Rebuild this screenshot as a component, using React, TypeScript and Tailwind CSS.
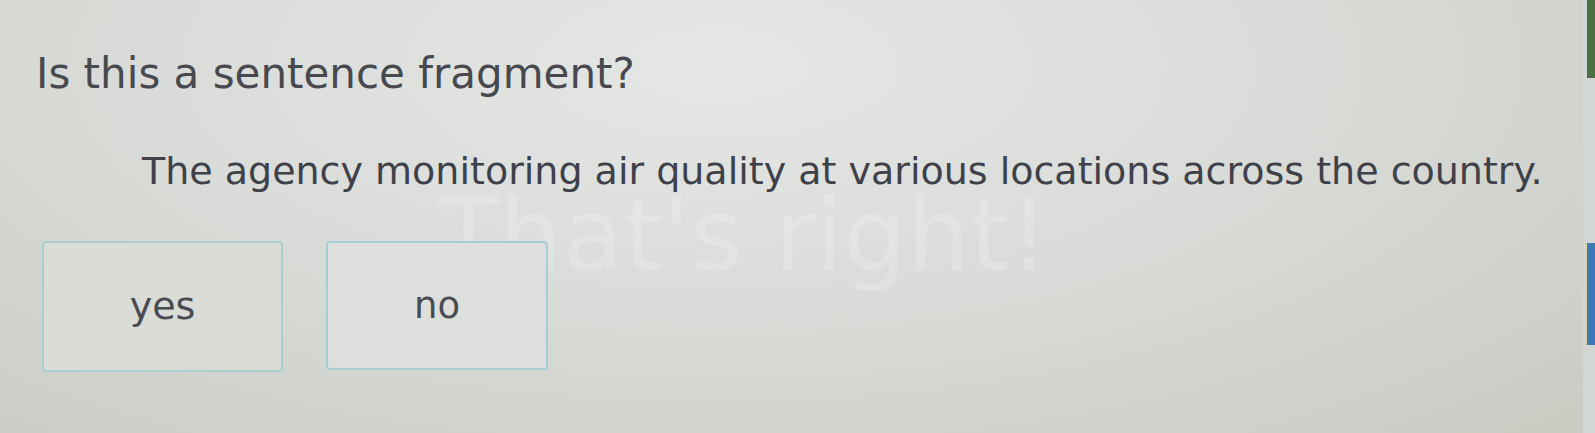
export default function App() {
  const font = { fontFamily: '"DejaVu Sans", Verdana, sans-serif' };

  return (
    <div
      className="relative h-[433px] w-[1595px] overflow-hidden bg-[radial-gradient(ellipse_at_45%_15%,#e4e7e4_0%,#d9dcd8_45%,#c9cbc3_100%)] text-[#48494f]"
      style={font}
    >
      {/* faint feedback text behind the answers */}
      <div className="pointer-events-none absolute left-[438px] top-[186px] select-none text-[100px] leading-[100px] text-white/20">
        That's right!
      </div>

      <div className="relative flex flex-col pt-[50px]">
        <h1 className="pl-[36px] text-[42px] leading-[48px] font-normal">
          Is this a sentence fragment?
        </h1>
        <p className="mt-[51px] pl-[142px] text-[38px] leading-[44px] text-[#3f414a]">
          The agency monitoring air quality at various locations across the country.
        </p>
        <div className="mt-[48px] flex gap-[43px] pl-[42px]">
          <button className="flex h-[131px] w-[241px] items-center justify-center rounded-[4px] border-2 border-[#a9cfd0] bg-[#dadcd8] text-[38px] text-[#4a4b52]">
            yes
          </button>
          <button className="flex h-[129px] w-[222px] items-center justify-center rounded-[4px] border-2 border-[#a4cdd6] bg-[#dcdfdb] text-[37px] text-[#4a4b52]">
            no
          </button>
        </div>
      </div>

      {/* edge of the neighbouring window */}
      <div className="absolute right-0 top-0 h-full w-[12px] bg-[#d3d7d3]" />
      <div className="absolute right-0 top-0 h-[78px] w-[8px] bg-[#4b7043]" />
      <div className="absolute right-0 top-[243px] h-[102px] w-[8px] bg-[#3c79b6]" />
      <div className="absolute right-[8px] top-[243px] h-[102px] w-[2px] bg-[#d9d6a8]" />
    </div>
  );
}
